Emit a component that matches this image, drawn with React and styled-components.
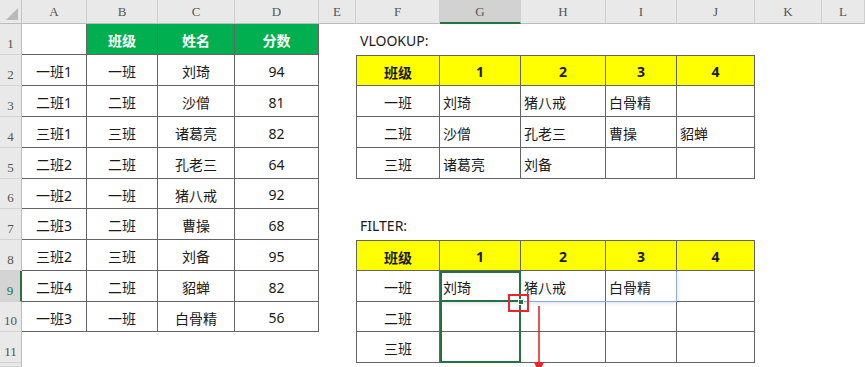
import styled, { createGlobalStyle } from "styled-components";

const GlobalStyle = createGlobalStyle`
  html, body {
    margin: 0;
    padding: 0;
    background: #fff;
    overflow: hidden;
  }
`;

const COLS = ["A", "B", "C", "D", "E", "F", "G", "H", "I", "J", "K", "L"];
const ACTIVE_COL = 6;
const ACTIVE_ROW = 9;

const roster = [
  ["一班1", "一班", "刘琦", "94"],
  ["二班1", "二班", "沙僧", "81"],
  ["三班1", "三班", "诸葛亮", "82"],
  ["二班2", "二班", "孔老三", "64"],
  ["一班2", "一班", "猪八戒", "92"],
  ["二班3", "二班", "曹操", "68"],
  ["三班2", "三班", "刘备", "95"],
  ["二班4", "二班", "貂蝉", "82"],
  ["一班3", "一班", "白骨精", "56"],
];

const headers = ["班级", "1", "2", "3", "4"];

const vlookupRows = [
  ["一班", "刘琦", "猪八戒", "白骨精", ""],
  ["二班", "沙僧", "孔老三", "曹操", "貂蝉"],
  ["三班", "诸葛亮", "刘备", "", ""],
];

const filterRows = [
  ["一班", "刘琦", "猪八戒", "白骨精", ""],
  ["二班", "", "", "", ""],
  ["三班", "", "", "", ""],
];

const Sheet = styled.div`
  display: grid;
  grid-template-columns: 22px 65px 71px 77px 84px 37px 84px 81px 85px 71px 78px 67px 1fr;
  grid-template-rows: 24px 31px 31px 31px 31px 31px 30px 31px 31px 31px 30px 31px 1fr;
  width: 865px;
  height: 367px;
  overflow: hidden;
  background: #fff;
  font-family: "Noto Sans", "Noto Sans CJK SC", sans-serif;
`;

const Corner = styled.div`
  grid-row: 1;
  grid-column: 1;
  position: relative;
  background: #e9e9e9;
  border-right: 1px solid #c4c4c4;
  border-bottom: 1px solid #bcbcbc;

  &::after {
    content: "";
    position: absolute;
    right: 3px;
    bottom: 3px;
    width: 12px;
    height: 12px;
    background: #b9b9b9;
    clip-path: polygon(100% 0, 100% 100%, 0 100%);
  }
`;

const ColHead = styled.div`
  grid-row: 1;
  grid-column: ${(p) => p.$c};
  display: flex;
  align-items: flex-end;
  justify-content: center;
  padding-bottom: ${(p) => (p.$active ? "2px" : "3px")};
  background: ${(p) => (p.$active ? "#d2d2d2" : "#e9e9e9")};
  border-right: 1px solid #cfcfcf;
  border-bottom: ${(p) => (p.$active ? "2px solid #217346" : "1px solid #bcbcbc")};
  font-family: "Liberation Serif", "DejaVu Serif", serif;
  font-size: 13px;
  color: #555;
`;

const RowHead = styled.div`
  grid-column: 1;
  grid-row: ${(p) => p.$r};
  display: flex;
  align-items: flex-end;
  justify-content: center;
  padding-bottom: 2px;
  background: ${(p) => (p.$active ? "#d4d4d4" : "#e9e9e9")};
  border-right: ${(p) => (p.$active ? "2px solid #217346" : "1px solid #bcbcbc")};
  border-bottom: 1px solid #d3d3d3;
  font-family: "Liberation Serif", "DejaVu Serif", serif;
  font-size: 13px;
  color: ${(p) => (p.$active ? "#217346" : "#555")};
`;

const Cell = styled.div`
  grid-row: ${(p) => p.$r};
  grid-column: ${(p) => p.$c};
  display: flex;
  align-items: center;
  justify-content: ${(p) => p.$align || "center"};
  padding: 2px 3px 0;
  background: ${(p) => p.$fill || "transparent"};
  color: ${(p) => p.$ink || "#1a1a1a"};
  font-weight: ${(p) => (p.$bold ? 700 : 400)};
  font-size: 14px;
  white-space: nowrap;
  border-right: ${(p) => (p.$grid ? "1px solid #646464" : "none")};
  border-bottom: ${(p) => (p.$grid ? "1px solid #646464" : "none")};
  border-left: ${(p) => (p.$edgeL ? "1px solid #646464" : "none")};
  border-top: ${(p) => (p.$edgeT ? "1px solid #646464" : "none")};
`;

const Title = styled.div`
  grid-row: ${(p) => p.$r};
  grid-column: ${(p) => p.$c} / span 3;
  display: flex;
  align-items: center;
  padding: 2px 4px 0;
  font-size: 14px;
  color: #1a1a1a;
`;

const SpillBox = styled.div`
  grid-column: 8 / 11;
  grid-row: 10;
  z-index: 1;
  border: 1px solid #8eaadf;
  border-top-color: transparent;
  box-shadow: 0 1px 4px rgba(60, 80, 120, 0.18);
  pointer-events: none;
`;

const Selection = styled.div`
  grid-column: 8;
  grid-row: ${(p) => p.$rows};
  z-index: 2;
  border: 2px solid #217346;
  pointer-events: none;
`;

const Anchor = styled.div`
  grid-column: 8;
  grid-row: 10;
  position: relative;
  z-index: 3;
  pointer-events: none;
`;

const FillHandle = styled.div`
  position: absolute;
  right: -3px;
  bottom: -3px;
  width: 6px;
  height: 6px;
  background: #217346;
  border: 1px solid #fff;
  box-sizing: border-box;
`;

const RedMark = styled.div`
  position: absolute;
  left: 68px;
  top: 23px;
  width: 21px;
  height: 18px;
  border: 2px solid #e8262b;
  box-sizing: border-box;
`;

const ArrowWrap = styled.div`
  position: absolute;
  left: 93px;
  top: 35px;
  width: 12px;
  height: 70px;
`;

function Arrow() {
  return (
    <svg width="12" height="70" viewBox="0 0 12 70">
      <line x1="6" y1="0" x2="6" y2="60" stroke="#e8262b" strokeWidth="1.6" />
      <polygon points="1,56 11,56 6,68" fill="#e8262b" />
    </svg>
  );
}

function cellSpec(r, c) {
  if (c <= 3 && r <= 10) {
    if (r === 1) {
      if (c === 0) return { text: "", grid: true };
      return { text: ["班级", "姓名", "分数"][c - 1], fill: "#00b050", ink: "#fff", bold: true, grid: true };
    }
    return { text: roster[r - 2][c], grid: true };
  }
  const inV = r >= 2 && r <= 5;
  const inF = r >= 8 && r <= 11;
  if (c >= 5 && c <= 9 && (inV || inF)) {
    const top = r === 2 || r === 8;
    const k = c - 5;
    const base = { grid: true, edgeL: c === 5, edgeT: top };
    if (top) return { ...base, text: headers[k], fill: "#ffff00", bold: true };
    const rows = inV ? vlookupRows : filterRows;
    const row = rows[r - (inV ? 3 : 9)];
    return { ...base, text: row[k], align: k === 0 ? "center" : "flex-start" };
  }
  return null;
}

function buildCells() {
  const out = [];
  for (let r = 1; r <= 12; r++) {
    for (let c = 0; c < COLS.length; c++) {
      const s = cellSpec(r, c);
      if (!s) continue;
      out.push(
        <Cell
          key={`${r}-${c}`}
          $r={r + 1}
          $c={c + 2}
          $align={s.align}
          $fill={s.fill}
          $ink={s.ink}
          $bold={s.bold}
          $grid={s.grid}
          $edgeL={s.edgeL}
          $edgeT={s.edgeT}
        >
          {s.text}
        </Cell>
      );
    }
  }
  return out;
}

export default function App() {
  return (
    <>
      <GlobalStyle />
      <Sheet>
        <Corner />
        {COLS.map((l, i) => (
          <ColHead key={l} $c={i + 2} $active={i === ACTIVE_COL}>
            {l}
          </ColHead>
        ))}
        {Array.from({ length: 12 }, (_, i) => (
          <RowHead key={i} $r={i + 2} $active={i + 1 === ACTIVE_ROW}>
            {i < 11 ? i + 1 : ""}
          </RowHead>
        ))}
        {buildCells()}
        <Title $r={2} $c={7}>VLOOKUP:</Title>
        <Title $r={8} $c={7}>FILTER:</Title>
        <SpillBox />
        <Selection $rows="10 / 13" />
        <Selection $rows="10" />
        <Anchor>
          <FillHandle />
          <RedMark />
          <ArrowWrap>
            <Arrow />
          </ArrowWrap>
        </Anchor>
      </Sheet>
    </>
  );
}
